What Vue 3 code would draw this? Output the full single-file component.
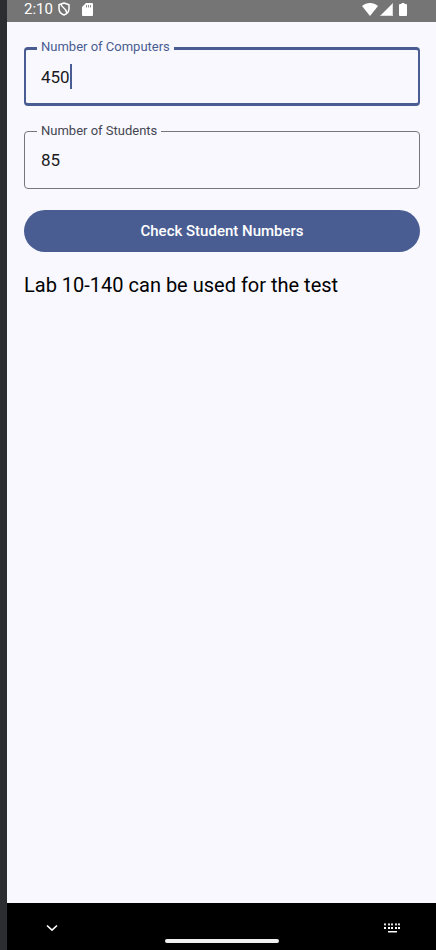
<script setup>
import { computed, ref } from 'vue'

const computers = ref('450')
const students = ref('85')
const result = ref('Lab 10-140 can be used for the test')
const active = ref('computers')

const caretOffset = computed(() => ({ width: `${computers.value.length}ch` }))

const keyColumns = [0, 4, 7, 11, 14]

function checkNumbers() {
  const enough = Number(students.value) <= Number(computers.value)
  result.value = enough
    ? 'Lab 10-140 can be used for the test'
    : 'Lab 10-140 cannot be used for the test'
}
</script>

<template>
  <div class="device">
    <header class="status">
      <span class="clock">2:10</span>
      <svg class="shield" width="12" height="14" viewBox="0 0 12 14" aria-hidden="true">
        <path d="M6 1 L11 2.8 V6.6 C11 9.6 9 12 6 13 C3 12 1 9.6 1 6.6 V2.8 Z" fill="none" stroke="#fff" stroke-width="1.5" stroke-linejoin="round" />
        <path d="M3.2 2.2 C3.2 6 8.6 5.6 8.8 11" fill="none" stroke="#fff" stroke-width="1.5" />
      </svg>
      <svg class="card" width="11" height="13" viewBox="0 0 11 13" aria-hidden="true">
        <path d="M4 0 H10 Q11 0 11 1 V12 Q11 13 10 13 H1 Q0 13 0 12 V4 Z" fill="#fff" />
        <path d="M4.5 2 V4.5 M6.5 2 V4.5 M8.5 2 V4.5" stroke="#757575" stroke-width="0.8" />
      </svg>
      <span class="signals">
        <svg width="16" height="13" viewBox="0 0 16 13" aria-hidden="true">
          <path d="M0 3 C4.5 -1 11.5 -1 16 3 L8 13 Z" fill="#fff" />
        </svg>
        <svg width="13" height="13" viewBox="0 0 13 13" aria-hidden="true">
          <path d="M13 0 V13 H0 Z" fill="#fff" />
          <path d="M12.5 1 V12.5 H1" fill="none" stroke="#c8c8c8" stroke-width="1" opacity="0.6" />
        </svg>
        <svg class="battery" width="8" height="13" viewBox="0 0 8 13" aria-hidden="true">
          <path d="M2.5 0 H5.5 V1 H7 Q8 1 8 2 V12 Q8 13 7 13 H1 Q0 13 0 12 V2 Q0 1 1 1 H2.5 Z" fill="#fff" />
        </svg>
      </span>
    </header>

    <main class="content">
      <div class="field" :class="{ focused: active === 'computers' }">
        <label for="computers">Number of Computers</label>
        <div class="entry">
          <input id="computers" v-model="computers" type="text" inputmode="numeric" @focus="active = 'computers'" />
          <span v-if="active === 'computers'" class="marker" aria-hidden="true">
            <span class="typed" :style="caretOffset"></span>
            <span class="caret"></span>
          </span>
        </div>
      </div>

      <div class="field" :class="{ focused: active === 'students' }">
        <label for="students">Number of Students</label>
        <div class="entry">
          <input id="students" v-model="students" type="text" inputmode="numeric" @focus="active = 'students'" />
        </div>
      </div>

      <button class="check" type="button" @click="checkNumbers">Check Student Numbers</button>
      <p class="result">{{ result }}</p>
    </main>

    <footer class="navigation">
      <button class="nav-button" type="button" aria-label="Hide keyboard">
        <svg width="12" height="8" viewBox="0 0 12 8" aria-hidden="true">
          <path d="M1 1.5 L6 6.2 L11 1.5" fill="none" stroke="#fff" stroke-width="1.6" />
        </svg>
      </button>
      <span class="handle"></span>
      <button class="nav-button" type="button" aria-label="Choose keyboard">
        <svg width="16" height="10" viewBox="0 0 16 10" aria-hidden="true">
          <template v-for="x in keyColumns" :key="x">
            <rect :x="x" y="0.4" width="2" height="2" fill="#ddd" />
            <rect :x="x" y="4" width="2" height="2" fill="#fff" />
          </template>
          <rect x="4" y="8" width="9" height="1" fill="#fff" />
          <rect x="4" y="9" width="9" height="1" fill="#777" />
        </svg>
      </button>
    </footer>
  </div>
</template>

<style>
body {
  margin: 0;
  background: #f9f8ff;
}
</style>

<style scoped>
.device {
  box-sizing: border-box;
  display: flex;
  flex-direction: column;
  min-height: 100vh;
  border-left: 7px solid #2c2d31;
  background: #f9f8ff;
  font-family: Roboto, "Liberation Sans", sans-serif;
}

svg {
  display: block;
}

.status {
  display: flex;
  align-items: center;
  height: 18px;
  padding: 0 29px 4px 17px;
  background: #757575;
  color: #fff;
}

.clock {
  font-size: 15px;
  line-height: 18px;
}

.shield {
  margin-left: 5px;
}

.card {
  margin-left: 12px;
}

.signals {
  display: flex;
  align-items: center;
  gap: 2px;
  margin-left: auto;
}

.battery {
  margin-left: 4px;
}

.content {
  display: flex;
  flex: 1;
  flex-direction: column;
  padding: 25px 16px 0 17px;
}

.field {
  position: relative;
  box-sizing: border-box;
  height: 58px;
  margin-bottom: 25px;
  padding: 0 1px;
  border: 1px solid #767680;
  border-radius: 4px;
}

.field.focused {
  height: 59px;
  padding: 0;
  border: 2px solid #495d92;
  border-width: 3px 2px;
}

.field label {
  position: absolute;
  top: -10px;
  left: 12px;
  padding: 0 4px;
  background: #f9f8ff;
  color: #45464f;
  font-size: 13px;
  line-height: 18px;
}

.focused label {
  top: -12px;
  left: 11px;
  color: #495d92;
}

.entry {
  position: relative;
  height: 100%;
  font-size: 17px;
}

.entry input {
  box-sizing: border-box;
  width: 100%;
  height: 100%;
  padding: 0 15px;
  border: 0;
  outline: 0;
  background: transparent;
  color: #1a1b21;
  caret-color: transparent;
  font: inherit;
}

.marker {
  position: absolute;
  inset: 0 15px;
  display: flex;
  align-items: center;
  pointer-events: none;
}

.caret {
  width: 2px;
  height: 25px;
  background: #495d92;
}

.check {
  height: 42px;
  margin-top: -4px;
  padding: 0 24px;
  border: 0;
  border-radius: 21px;
  background: #495d92;
  color: #fff;
  font: 500 15px/20px Roboto, "Liberation Sans", sans-serif;
}

.result {
  margin: 21px 0 0;
  color: #000;
  font-size: 20px;
  line-height: 25px;
}

.navigation {
  box-sizing: border-box;
  display: flex;
  align-items: center;
  justify-content: space-between;
  height: 47px;
  padding: 2px 34px 0 35px;
  background: #000;
}

.nav-button {
  display: grid;
  width: 20px;
  height: 24px;
  padding: 0;
  border: 0;
  background: transparent;
  place-items: center;
}

.handle {
  align-self: flex-end;
  width: 114px;
  height: 4px;
  margin-bottom: 7px;
  border-radius: 2px;
  background: #f0f0f0;
}
</style>
